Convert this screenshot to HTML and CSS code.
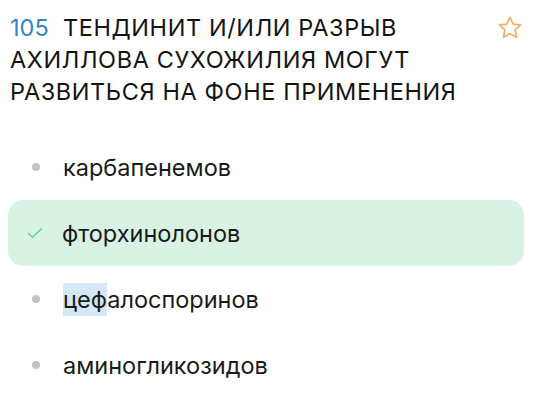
FILE: index.html
```html
<!DOCTYPE html>
<html lang="ru">
<head>
  <meta charset="UTF-8">
  <meta name="viewport" content="width=device-width, initial-scale=1.0">
  <title>Вопрос 105</title>
  <link rel="stylesheet" href="styles.css">
</head>
<body>
  <div class="question">
    <div class="question-head">
      <h2 class="question-title"><span class="num">105</span> ТЕНДИНИТ И/ИЛИ РАЗРЫВ АХИЛЛОВА СУХОЖИЛИЯ МОГУТ РАЗВИТЬСЯ НА ФОНЕ ПРИМЕНЕНИЯ</h2>
      <div class="fav">
        <svg width="28" height="28" viewBox="0 0 24 24" fill="none" stroke="#f6ae66" stroke-width="1.5" stroke-linejoin="round">
          <path d="M12 2.8l2.75 5.8 6.3.75-4.65 4.35 1.2 6.25L12 16.9l-5.6 3.05 1.2-6.25L2.95 9.35l6.3-.75z"/>
        </svg>
      </div>
    </div>

    <ul class="answers">
      <li class="answer"><span class="dot"></span>карбапенемов</li>
      <li class="answer correct">
        <svg class="check" width="16" height="16" viewBox="0 0 16 16" fill="none" stroke="#62cf9a" stroke-width="1.4" stroke-linecap="round" stroke-linejoin="round">
          <path d="M1.5 8.5l4 3.8L14.5 3.8"/>
        </svg>
        фторхинолонов
      </li>
      <li class="answer"><span class="dot"></span><span><mark>цеф</mark>алоспоринов</span></li>
      <li class="answer"><span class="dot"></span>аминогликозидов</li>
    </ul>
  </div>
</body>
</html>
```

FILE: styles.css
```css
*{
  margin: 0;
  padding: 0;
  box-sizing: border-box;
}
body{
  background-color: #fff;
  font-family: Inter, 'Noto Sans', sans-serif;
  color: #141414;
}
.question{
  padding: 12px 16px 0 10px;
}
.question-head{
  display: flex;
  align-items: flex-start;
  justify-content: space-between;
}
.question-title{
  font-size: 23.5px;
  font-weight: 400;
  line-height: 32px;
  letter-spacing: 0.6px;
  max-width: 470px;
}
.question-title .num{
  color: #3285c6;
  letter-spacing: 0;
  margin-right: 7px;
}
.fav{
  padding-top: 2px;
}
.answers{
  list-style: none;
  margin-top: 26px;
}
.answer{
  display: flex;
  align-items: center;
  height: 66px;
  padding-left: 22px;
  margin-left: -2px;
  font-size: 23.5px;
  color: #1a1a1a;
  border-radius: 15px;
}
.answer .dot{
  width: 8px;
  height: 8px;
  border-radius: 50%;
  background-color: #c3c3c3;
  margin-left: 2px;
  margin-right: 23px;
}
.answer.correct{
  background-color: #d8f2e4;
}
.answer .check{
  margin-left: -3px;
  margin-right: 19px;
}
mark{
  background-color: #d6e7f7;
  color: inherit;
  padding: 2px 0;
}
```
